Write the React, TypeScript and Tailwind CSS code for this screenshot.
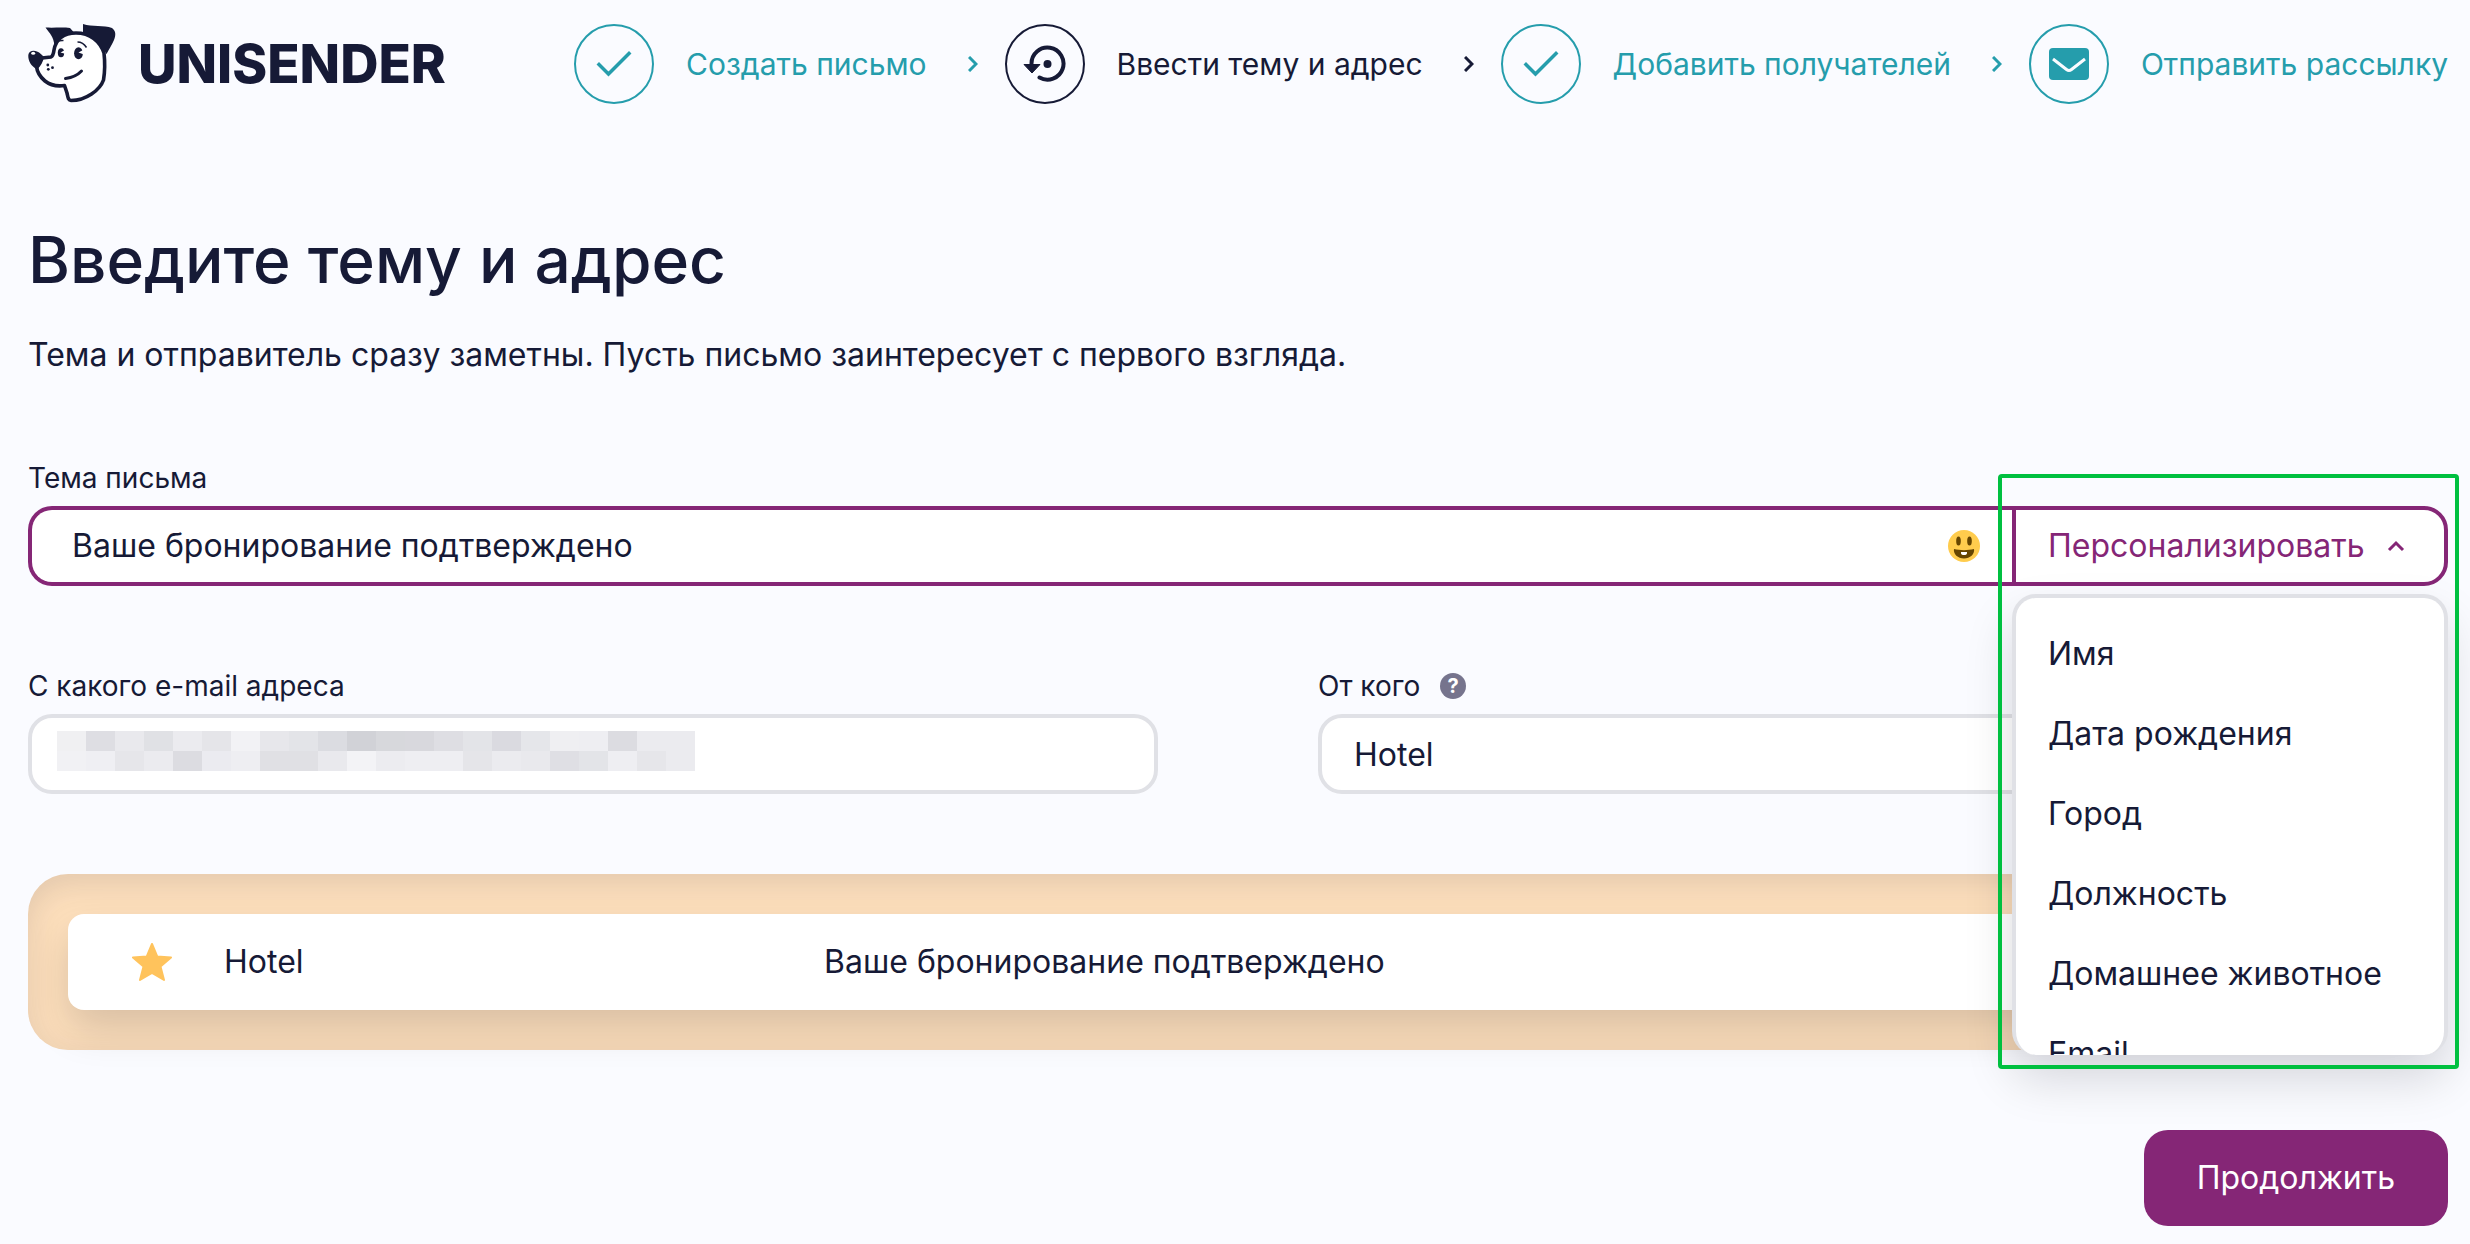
import React from "react";

const steps = [
  { label: "Создать письмо", icon: "check", active: false },
  { label: "Ввести тему и адрес", icon: "restore", active: true },
  { label: "Добавить получателей", icon: "check", active: false },
  { label: "Отправить рассылку", icon: "mail", active: false },
];

const fields = ["Имя", "Дата рождения", "Город", "Должность", "Домашнее животное", "Email"];

// Shades of the pixelated sender address, row by row.
const mosaic = [
  "#f0f0f2", "#dedee3", "#e9e9ed", "#e0e1e5", "#ebebef", "#e5e5e9", "#f2f2f5", "#e7e7eb", "#e3e4e8", "#dbdce1", "#d1d2d7",
  "#d7d8dc", "#d8d8dd", "#dedee3", "#e3e4e8", "#dadae0", "#e5e6ea", "#efeff2", "#eeeef2", "#dcdce1", "#ebebef", "#ebebef",
  "#f1f1f4", "#efeff3", "#e6e6ea", "#ebebef", "#dcdce1", "#ebebf0", "#eeeef2", "#e0e0e4", "#e0e0e4", "#e9e9ed", "#f3f3f6",
  "#ececf0", "#eeeef2", "#eeeef2", "#e5e5e9", "#ebebef", "#e9e9ed", "#dfdfe4", "#e3e4e8", "#eeeef2", "#e6e6ea", "#ebebef",
];

function DogLogo() {
  return (
    <svg viewBox="0 0 90 80" className="h-20 w-[90px]" aria-hidden="true">
      <path
        d="M26 26 C28 15 36 9 48 9 C62 9 72 17 76 29 C77 38 77 47 75.500 56 C72 66 58 76.500 43 76.500 C40 76.500 40 73 39 69 L36.500 61.500 C29 62.500 22 61 17 57 C11 52 9 48 8.500 42 L14 34 L23 33 C25 32 25.500 30 26 26 Z"
        fill="#fff"
        stroke="#161a36"
        strokeWidth="3.600"
        strokeLinejoin="round"
      />
      <path d="M17.500 3.500 C26 4 35 3 42 4 L46 8.500 C37 9.500 30 13 26.500 22 C25.500 12 22 10 17.500 3.500 Z" fill="#161a36" />
      <path d="M55 0 C64 3 76 1 84 4 C88 7 88 11 86 16 C84 21 81 25 78.500 30 C73 21 65 11 55 9.500 Z" fill="#161a36" />
      <path d="M0.300 31 C1 27 5 26 9 27.500 C12 28.500 14 31 16 33 C15 38 13 42 9 45.500 C3 42 0 37 0.300 31 Z" fill="#161a36" />
      <ellipse cx="5.200" cy="29.300" rx="2" ry="1.500" fill="#fff" />
      <ellipse cx="33" cy="28.700" rx="3.200" ry="4.500" fill="#161a36" />
      <path d="M38 25.500 L32.500 28.500 L38 30 Z" fill="#fff" />
      <ellipse cx="50.500" cy="29.300" rx="4.400" ry="6" fill="#161a36" />
      <path d="M56 25.500 L50.500 28.500 L56 30.500 Z" fill="#fff" />
      <path d="M29.500 18 Q32 16 35.500 16.500 M49.500 18 Q55 18 58.500 23.500" fill="none" stroke="#161a36" strokeWidth="1.500" />
      <circle cx="19.800" cy="41" r="1.400" fill="#161a36" />
      <circle cx="20.300" cy="45.300" r="1.400" fill="#161a36" />
      <circle cx="24.500" cy="43.700" r="1.400" fill="#161a36" />
      <path d="M37.500 54.500 Q48 53 53.500 47" fill="none" stroke="#161a36" strokeWidth="3" strokeLinecap="round" />
    </svg>
  );
}

function StepIcon({ icon }: { icon: string }) {
  if (icon === "check")
    return (
      <svg viewBox="0 0 40 40" className="size-10" fill="none" stroke="currentColor" strokeWidth="3.500" strokeLinecap="square">
        <path d="M5 20.500 L14.500 30 L35 9.500" />
      </svg>
    );
  if (icon === "mail")
    return (
      <svg viewBox="0 0 40 32" className="h-8 w-10">
        <rect width="40" height="32" rx="4" fill="currentColor" />
        <path d="M4 11 L17.500 21.500 Q20 23.500 22.500 21.500 L36 11" fill="none" stroke="#fafbff" strokeWidth="3" />
      </svg>
    );
  return (
    <svg viewBox="0 0 44 40" className="h-10 w-11" fill="none">
      <path d="M8.500 20 A16 16 0 1 1 16.500 33.500" stroke="currentColor" strokeWidth="4" strokeLinecap="round" />
      <path d="M1 20.500 H17 L9 29 Z" fill="currentColor" stroke="currentColor" strokeLinejoin="round" />
      <circle cx="24.500" cy="20" r="4" fill="currentColor" />
    </svg>
  );
}

function Smile() {
  return (
    <svg viewBox="0 0 32 32" className="size-8" aria-hidden="true">
      <circle cx="16" cy="16" r="16" fill="#ffcc4d" />
      <ellipse cx="10.500" cy="11" rx="2.300" ry="4.500" fill="#664500" />
      <ellipse cx="21.500" cy="11" rx="2.300" ry="4.500" fill="#664500" />
      <path d="M6 19 C12 20.500 20 20.500 26 19 C27 24 22 28.500 16 28.500 C10 28.500 5 24 6 19 Z" fill="#664500" />
      <path d="M13 22 H19 V23 Q19 25 16 25 Q13 25 13 23 Z" fill="#fff" />
    </svg>
  );
}

export default function App() {
  return (
    <div className="min-h-screen bg-[#fafbff] pt-6 pr-[22px] pb-[18px] pl-7 font-['Inter',sans-serif] text-[32px] leading-10 text-[#161a36]">
      <header className="flex items-center justify-between">
        <a href="#" aria-label="Unisender" className="flex items-center gap-5">
          <DogLogo />
          <span className="text-[53px] font-extrabold">UNISENDER</span>
        </a>
        <nav aria-label="Шаги">
          <ol className="flex items-center">
            {steps.map((s, i) => (
              <li key={s.label} className={s.active ? "flex items-center" : "flex items-center text-[#259dac]"}>
                <a href="#" className="flex items-center gap-8 text-[30px]" aria-current={s.active ? "step" : undefined}>
                  <span className="flex size-20 items-center justify-center rounded-full border-2 border-current">
                    <StepIcon icon={s.icon} />
                  </span>
                  <span>{s.label}</span>
                </a>
                {i < steps.length - 1 && (
                  <svg viewBox="0 0 10 16" className="mr-[27px] ml-[41px] h-4 w-2.5" fill="none" stroke="currentColor" strokeWidth="3" aria-hidden="true">
                    <path d="M1 1 L8 8 L1 15" />
                  </svg>
                )}
              </li>
            ))}
          </ol>
        </nav>
      </header>

      <main>
        <h1 className="mt-[116px] text-[64px] leading-20 font-medium">Введите тему и адрес</h1>
        <p className="mt-[35px]">Тема и отправитель сразу заметны. Пусть письмо заинтересует с первого взгляда.</p>

        <label htmlFor="subject" className="mt-[83px] block text-[28px] leading-10">
          Тема письма
        </label>
        <div className="mt-2 flex h-20">
          <div className="flex min-w-0 flex-1 rounded-l-3xl border-4 border-r-0 border-[#852676] bg-white">
            <input
              id="subject"
              defaultValue="Ваше бронирование подтверждено"
              className="min-w-0 flex-1 bg-transparent pl-10 outline-none"
            />
            <button aria-label="Эмодзи" className="mr-8 flex items-center">
              <Smile />
            </button>
          </div>
          <div className="relative w-[436px]">
            <button
              aria-expanded="true"
              className="flex h-20 w-full items-center gap-[22px] rounded-r-3xl border-4 border-[#852676] bg-white pl-8 text-[#852676]"
            >
              Персонализировать
              <svg viewBox="0 0 18 12" className="h-3 w-[18px]" fill="none" stroke="currentColor" strokeWidth="3" aria-hidden="true">
                <path d="M2 10 L9 3 L16 10" />
              </svg>
            </button>
            <ul className="absolute top-22 left-0 z-10 h-[461px] w-full overflow-hidden rounded-3xl border-4 border-b-0 border-[#e0e1e6] bg-white pt-4 shadow-[0_24px_48px_rgba(10,10,20,0.15)]">
              {fields.map((f) => (
                <li key={f}>
                  <button className="block h-20 w-full pl-8 text-left leading-10">{f}</button>
                </li>
              ))}
            </ul>
            <div className="pointer-events-none absolute -top-8 -right-[11px] -left-3.5 z-20 h-[595px] rounded-sm border-4 border-[#00c040]" />
          </div>
        </div>

        <div className="mt-20 grid grid-cols-2 gap-40">
          <div>
            <label htmlFor="from" className="block text-[28px] leading-10">
              С какого e-mail адреса
            </label>
            <div className="relative mt-2">
              <input id="from" className="block h-20 w-full rounded-3xl border-4 border-[#e0e1e6] bg-white px-8 outline-none" />
              <div className="pointer-events-none absolute top-[17px] left-[29px] grid grid-cols-[repeat(22,29px)] auto-rows-[20px]">
                {mosaic.map((c, i) => (
                  <span key={i} style={{ backgroundColor: c }} />
                ))}
              </div>
            </div>
          </div>
          <div>
            <div className="flex items-center gap-5">
              <label htmlFor="name" className="block text-[28px] leading-10">
                От кого
              </label>
              <button
                aria-label="Подсказка"
                className="flex size-[26px] items-center justify-center rounded-full bg-[#76748d] text-xl font-bold text-white"
              >
                ?
              </button>
            </div>
            <input
              id="name"
              defaultValue="Hotel"
              className="mt-2 block h-20 w-full rounded-3xl border-4 border-[#e0e1e6] bg-white px-8 outline-none"
            />
          </div>
        </div>

        <section className="mt-20 rounded-[40px] bg-[#fddfbc] p-10 shadow-[inset_0_8px_32px_rgba(22,26,54,0.12)]">
          <div className="flex h-24 items-center rounded-2xl bg-white px-16 shadow-[0_20px_40px_rgba(10,10,20,0.14)]">
            <svg viewBox="0 0 40 38" className="h-[38px] w-10" fill="#ffc35c" stroke="#ffc35c" strokeWidth="2" strokeLinejoin="round" aria-hidden="true">
              <path d="M20 1 L25.200 13.500 L39 14.500 L28.500 23.500 L32 37 L20 30 L8 37 L11.500 23.500 L1 14.500 L14.800 13.500 Z" />
            </svg>
            <span className="ml-[52px] w-[600px]">Hotel</span>
            <span>Ваше бронирование подтверждено</span>
          </div>
        </section>

        <div className="mt-20 flex justify-end">
          <button className="h-24 rounded-3xl bg-[#852676] px-[53px] text-white">Продолжить</button>
        </div>
      </main>
    </div>
  );
}
